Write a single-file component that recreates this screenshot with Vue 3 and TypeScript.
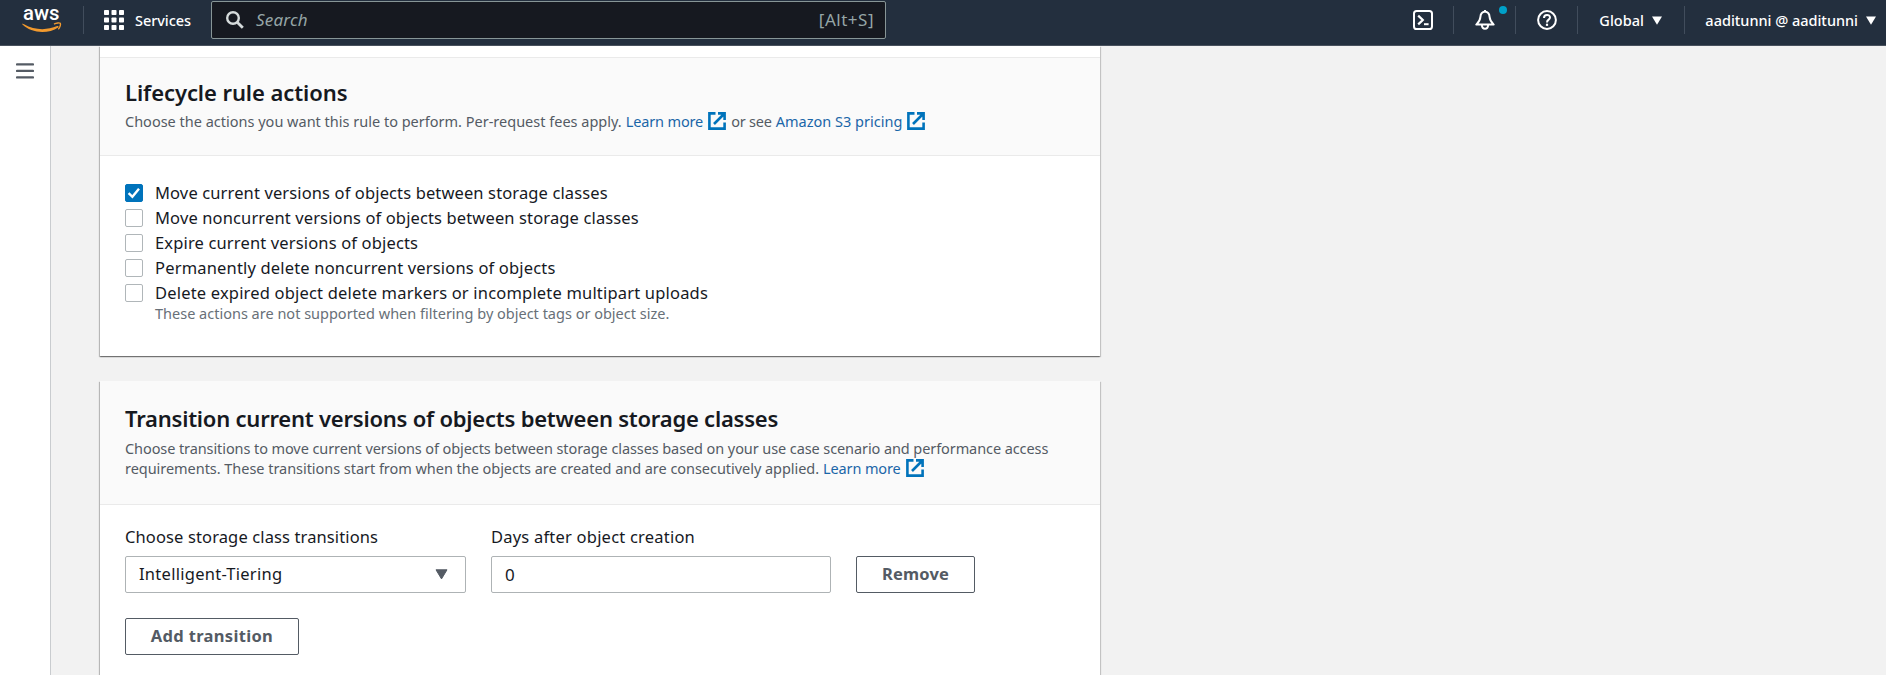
<script setup lang="ts">
import { ref } from 'vue'

interface RuleAction {
  label: string
  checked: boolean
  hint?: string
}

const actions = ref<RuleAction[]>([
  { label: 'Move current versions of objects between storage classes', checked: true },
  { label: 'Move noncurrent versions of objects between storage classes', checked: false },
  { label: 'Expire current versions of objects', checked: false },
  { label: 'Permanently delete noncurrent versions of objects', checked: false },
  {
    label: 'Delete expired object delete markers or incomplete multipart uploads',
    checked: false,
    hint: 'These actions are not supported when filtering by object tags or object size.',
  },
])

const storageClass = ref('Intelligent-Tiering')
const days = ref('0')
</script>

<template>
  <div class="page">
    <header class="topbar">
      <svg class="logo" width="40" height="28" viewBox="0 0 40 28">
        <text x="1" y="14.3" textLength="36.5" lengthAdjust="spacingAndGlyphs">aws</text>
        <path d="M0 18C0.6 17.5 1.2 17.9 2 18.3C12.5 24.2 24.5 24.6 35.2 20.1C36.4 19.6 37.2 20.7 36.2 21.4C26 28.2 9.500 27.600 0 18Z" fill="#f29a2e" />
        <path d="M32 18.100C34.500 16.700 37.600 16.700 38.300 17.300C38.900 18.300 38.100 21.300 36.300 23.200" fill="none" stroke="#f29a2e" stroke-width="1.4" />
      </svg>
      <span class="divider first"></span>
      <button class="services">
        <svg width="20" height="20" viewBox="0 0 20 20" fill="#fff">
          <template v-for="r in 3" :key="r">
            <rect v-for="c in 3" :key="c" :x="(c - 1) * 7.5" :y="(r - 1) * 7.5" width="5" height="5" rx="0.8" />
          </template>
        </svg>
        <span>Services</span>
      </button>
      <div class="search">
        <svg width="18" height="18" viewBox="0 0 18 18" fill="none" stroke="#d5dbdb" stroke-width="2.4">
          <circle cx="7" cy="7" r="5.8" />
          <path d="M11.2 11.2L16.8 16.8" stroke-width="2.8" />
        </svg>
        <span class="placeholder">Search</span>
        <span class="shortcut">[Alt+S]</span>
      </div>
      <nav class="tools">
        <button class="tool">
          <svg width="20" height="20" viewBox="0 0 20 20" fill="none" stroke="#fff" stroke-width="2">
            <rect x="1" y="1" width="18" height="18" rx="2.6" />
            <path d="M5.2 5.6L9.8 10L5.2 14.4" stroke-width="2.2" />
            <path d="M11 14.2H15.6" />
          </svg>
        </button>
        <span class="divider"></span>
        <button class="tool">
          <svg width="20" height="20" viewBox="0 0 20 20" fill="none" stroke="#fff" stroke-width="2" stroke-linejoin="round">
            <path d="M10 1.6C7.2 2 5.6 4 5.4 7C5.2 10.6 4 12 1.3 14.6H18.7C16 12 14.8 10.6 14.6 7C14.4 4 12.8 2 10 1.6Z" />
            <path d="M6.9 15C7 20 13 20 13.1 15" />
            <path d="M10 0V2" />
          </svg>
          <span class="dot"></span>
        </button>
        <span class="divider"></span>
        <button class="tool">
          <svg width="20" height="20" viewBox="0 0 20 20" fill="none" stroke="#fff" stroke-width="2">
            <circle cx="10" cy="10" r="8.9" />
            <path d="M7 8C7 4 13 4 13 7.6C13 9.9 10 9.5 10 12.4" />
            <path d="M10 13.7V15.9" stroke-width="2.2" />
          </svg>
        </button>
        <span class="divider"></span>
        <button class="menu region">
          <span>Global</span>
          <svg width="10" height="9" viewBox="0 0 10 9"><path d="M0 0.4H10L5 8.8Z" fill="#fff" /></svg>
        </button>
        <span class="divider"></span>
        <button class="menu account">
          <span>aaditunni @ aaditunni</span>
          <svg width="10" height="9" viewBox="0 0 10 9"><path d="M0 0.4H10L5 8.8Z" fill="#fff" /></svg>
        </button>
      </nav>
    </header>

    <div class="body">
      <aside class="rail">
        <svg width="18" height="16" viewBox="0 0 18 16" stroke="#545b64" stroke-width="2.2" stroke-linecap="round">
          <path d="M1 1.4H17M1 7.9H17M1 14.4H17" />
        </svg>
      </aside>
      <main class="content">
        <section class="card actions-card">
          <div class="card-head">
            <h2>Lifecycle rule actions</h2>
            <p class="desc intro">
              <span>Choose the actions you want this rule to perform. Per-request fees apply.</span>
              <a class="learn">Learn more</a>
              <svg class="ext" viewBox="0 0 18 18"><path d="M7.5 1.4H1.4V16.6H16.6V10.5M6 12L15.5 2.5M10 1.4H16.6V8" /></svg>
              <span class="or">or see</span>
              <a class="pricing">Amazon S3 pricing</a>
              <svg class="ext" viewBox="0 0 18 18"><path d="M7.5 1.4H1.4V16.6H16.6V10.5M6 12L15.5 2.5M10 1.4H16.6V8" /></svg>
            </p>
          </div>
          <div class="options">
            <label v-for="a in actions" :key="a.label" class="option">
              <span class="box" :class="{ on: a.checked }">
                <svg v-if="a.checked" width="14" height="14" viewBox="0 0 14 14"><path d="M1.6 7.2L5.4 10.8L12 2.8" /></svg>
              </span>
              <span class="option-text">{{ a.label }}</span>
              <span v-if="a.hint" class="hint">{{ a.hint }}</span>
            </label>
          </div>
        </section>

        <section class="card transition-card">
          <div class="card-head">
            <h2>Transition current versions of objects between storage classes</h2>
            <p class="desc line-one">Choose transitions to move current versions of objects between storage classes based on your use case scenario and performance access</p>
            <p class="desc line-two">
              <span>requirements. These transitions start from when the objects are created and are consecutively applied.</span>
              <a class="learn">Learn more</a>
              <svg class="ext" viewBox="0 0 18 18"><path d="M7.5 1.4H1.4V16.6H16.6V10.5M6 12L15.5 2.5M10 1.4H16.6V8" /></svg>
            </p>
          </div>
          <div class="form">
            <div class="fields">
              <div class="field">
                <span class="field-label choose">Choose storage class transitions</span>
                <div class="control">
                  <span class="value">{{ storageClass }}</span>
                  <svg width="13" height="11" viewBox="0 0 13 11"><path d="M1 0.8H12L6.5 9.9Z" fill="#545b64" stroke="#545b64" stroke-linejoin="round" /></svg>
                </div>
              </div>
              <div class="field narrow">
                <span class="field-label days">Days after object creation</span>
                <div class="control"><span class="number">{{ days }}</span></div>
              </div>
              <button class="btn remove">Remove</button>
            </div>
            <button class="btn add">Add transition</button>
          </div>
        </section>
      </main>
    </div>
  </div>
</template>

<style>
body { margin: 0; overflow: hidden; }
</style>

<style scoped>
.page {
  width: 1886px;
  height: 675px;
  overflow: hidden;
  display: flex;
  flex-direction: column;
  background: #f2f2f2;
  color: #16191f;
  font-family: "Noto Sans", sans-serif;
  font-size: 16.5px;
}
* { box-sizing: border-box; }
button { border: 0; padding: 0; background: none; font: inherit; color: inherit; display: flex; align-items: center; }
h2, p { margin: 0; }
svg { flex: none; display: block; }
span, a, p, h2, button { white-space: nowrap; }

.topbar {
  flex: none;
  height: 46px;
  padding: 0 10px 6px 22px;
  display: flex;
  align-items: center;
  background: #232f3e;
  border-bottom: 1px solid #48515d;
  color: #fff;
  font-size: 14.5px;
  font-weight: 500;
}
.logo { overflow: visible; }
.logo text { font-family: Roboto, sans-serif; font-size: 20.5px; font-weight: 500; fill: #fff; }
.divider { flex: none; width: 1px; height: 28px; background: #414d5c; }
.divider.first { margin-left: 21px; }
.services { margin-left: 20px; gap: 11px; letter-spacing: -0.05px; width: 107px; }
.services span { padding-top: 1px; }
.search {
  width: 675px;
  height: 38px;
  margin: 1px 0 0;
  padding: 0 11px 0 14px;
  display: flex;
  align-items: center;
  border: 1px solid #879596;
  border-radius: 2px;
  background: #161920;
  color: #95a5a6;
  font-size: 17px;
  font-weight: 400;
}
.search span { margin-top: -1px; }
.placeholder { margin-left: 12px; font-style: italic; letter-spacing: 0.2px; }
.shortcut { margin-left: auto; letter-spacing: 0.5px; }
.tools { margin-left: auto; display: flex; align-items: center; }
.tool { position: relative; width: 61px; height: 28px; justify-content: center; }
.dot { position: absolute; top: 0; right: 8px; width: 8px; height: 8px; border-radius: 50%; background: #00a1c9; }
.menu { padding-top: 1px; gap: 8px; }
.region { width: 106px; padding-left: 21px; }
.account { padding-left: 20px; }
.account span { letter-spacing: -0.02px; }

.body { flex: 1; min-height: 0; display: flex; }
.rail { flex: none; width: 51px; padding: 17px 0 0 16px; background: #fff; border-right: 1px solid #c9cccf; }
.content { width: 1050px; padding-left: 49px; }
.card {
  width: 1000px;
  background: #fff;
  box-shadow: 0 1px 1px 0 rgba(0, 0, 0, 0.3), 1px 1px 1px 0 rgba(0, 0, 0, 0.15), -1px 1px 1px 0 rgba(0, 0, 0, 0.2);
}
.card-head { background: #fafafa; border-bottom: 1px solid #eaeaea; padding: 0 25px; }
h2 { font-size: 22px; line-height: 28px; font-weight: 600; }
.desc { display: flex; align-items: center; font-size: 14.5px; line-height: 20px; height: 20px; color: #545b64; }
.desc a { color: #1a66a8; }
.ext { width: 18px; height: 18px; margin-left: 5px; fill: none; stroke: #0073bb; stroke-width: 2.6; }
.learn { margin-left: 4px; letter-spacing: -0.14px; }

.actions-card { height: 310px; padding-top: 11px; }
.actions-card .card-head { height: 99px; border-top: 1px solid #eaeaea; padding-top: 20px; }
.actions-card h2 { letter-spacing: -0.08px; }
.actions-card .desc { margin-top: 5px; }
.or { margin-left: 5px; letter-spacing: -0.2px; }
.pricing { margin-left: 4px; letter-spacing: 0; }

.options { padding: 24px 25px 0; }
.option { display: grid; grid-template-columns: 30px 1fr; align-items: center; line-height: 25px; }
.box { width: 18px; height: 18px; border: 1px solid #b0b6b9; border-radius: 2px; background: #fff; display: flex; align-items: center; justify-content: center; }
.box.on { background: #0073bb; border-color: #0073bb; }
.box path { fill: none; stroke: #fff; stroke-width: 2.4; }
.option:nth-child(1) .option-text { letter-spacing: 0.125px; }
.option:nth-child(2) .option-text { letter-spacing: 0.13px; }
.option:nth-child(3) .option-text { letter-spacing: 0.15px; }
.option:nth-child(4) .option-text { letter-spacing: 0.175px; }
.option:nth-child(5) .option-text { letter-spacing: 0.185px; }
.hint { grid-column: 2; font-size: 14.5px; line-height: 20px; color: #687078; margin-top: -2px; }

.transition-card { height: 320px; margin-top: 25px; }
.transition-card .card-head { height: 124px; padding-top: 23px; }
.transition-card h2 { letter-spacing: -0.225px; }
.line-one { margin-top: 6px; letter-spacing: -0.09px; }
.line-two span { letter-spacing: -0.04px; }

.form { padding: 19px 25px; }
.fields { display: flex; align-items: flex-end; gap: 25px; }
.field { width: 341px; }
.field.narrow { width: 340px; }
.field-label { display: block; line-height: 25px; margin-bottom: 7px; }
.choose { letter-spacing: 0.12px; }
.days { letter-spacing: 0.215px; }
.control {
  height: 37px;
  padding: 0 17px 2px 13px;
  display: flex;
  align-items: center;
  justify-content: space-between;
  border: 1px solid #aeb3b5;
  border-radius: 2px;
}
.control svg { margin-top: 2px; }
.value { letter-spacing: 0.27px; }
.number { padding-top: 1px; font-size: 17px; }
.btn {
  height: 37px;
  padding-bottom: 2px;
  justify-content: center;
  border: 1px solid #545b64;
  border-radius: 2px;
  color: #545b64;
  font-weight: 700;
}
.remove { width: 119px; letter-spacing: 0.2px; }
.add { width: 174px; margin-top: 25px; letter-spacing: 0.33px; }
</style>
